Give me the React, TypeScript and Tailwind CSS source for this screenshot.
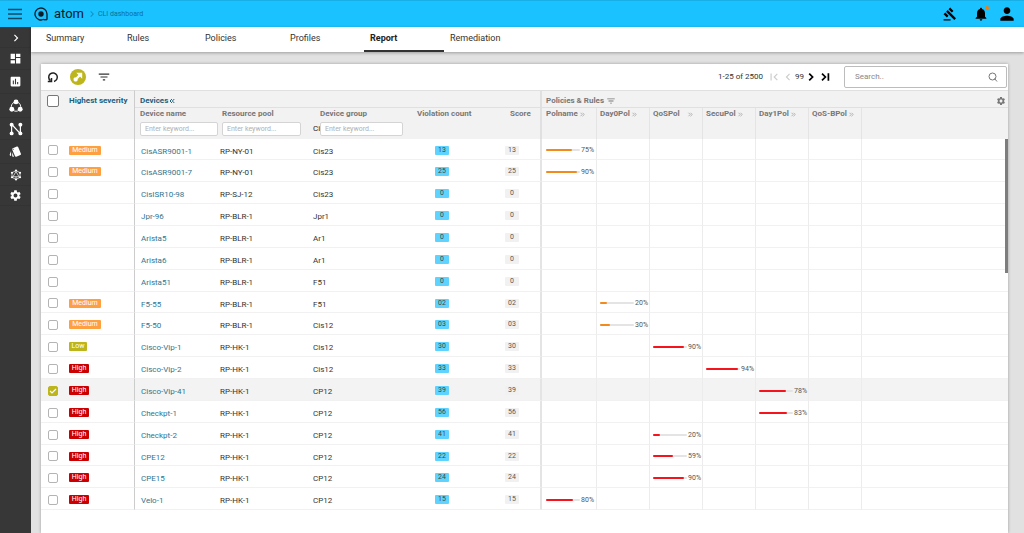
import React, { useState } from 'react'
import clsx from 'clsx'
import { ChevronsLeft, ChevronsRight } from 'lucide-react'
import {
  MdChevronLeft,
  MdChevronRight,
  MdDashboard,
  MdFilterList,
  MdFirstPage,
  MdGavel,
  MdInsertChart,
  MdNotifications,
  MdPerson,
  MdSettings,
  MdStyle
} from 'react-icons/md'

type Severity = 'Low' | 'Medium' | 'High'

interface Device {
  name: string
  pool: string
  group: string
  count: string
  severity?: Severity
  policy?: string
  value?: number
}

const policies = ['Polname', 'Day0Pol', 'QoSPol', 'SecuPol', 'Day1Pol', 'QoS-BPol']

const devices: Device[] = [
  { name: 'CisASR9001-1', pool: 'RP-NY-01', group: 'Cis23', count: '13', severity: 'Medium', policy: 'Polname', value: 75 },
  { name: 'CisASR9001-7', pool: 'RP-NY-01', group: 'Cis23', count: '25', severity: 'Medium', policy: 'Polname', value: 90 },
  { name: 'CisISR10-98', pool: 'RP-SJ-12', group: 'Cis23', count: '0' },
  { name: 'Jpr-96', pool: 'RP-BLR-1', group: 'Jpr1', count: '0' },
  { name: 'Arista5', pool: 'RP-BLR-1', group: 'Ar1', count: '0' },
  { name: 'Arista6', pool: 'RP-BLR-1', group: 'Ar1', count: '0' },
  { name: 'Arista51', pool: 'RP-BLR-1', group: 'F51', count: '0' },
  { name: 'F5-55', pool: 'RP-BLR-1', group: 'F51', count: '02', severity: 'Medium', policy: 'Day0Pol', value: 20 },
  { name: 'F5-50', pool: 'RP-BLR-1', group: 'Cis12', count: '03', severity: 'Medium', policy: 'Day0Pol', value: 30 },
  { name: 'Cisco-Vip-1', pool: 'RP-HK-1', group: 'Cis12', count: '30', severity: 'Low', policy: 'QoSPol', value: 90 },
  { name: 'Cisco-Vip-2', pool: 'RP-HK-1', group: 'Cis12', count: '33', severity: 'High', policy: 'SecuPol', value: 94 },
  { name: 'Cisco-Vip-41', pool: 'RP-HK-1', group: 'CP12', count: '39', severity: 'High', policy: 'Day1Pol', value: 78 },
  { name: 'Checkpt-1', pool: 'RP-HK-1', group: 'CP12', count: '56', severity: 'High', policy: 'Day1Pol', value: 83 },
  { name: 'Checkpt-2', pool: 'RP-HK-1', group: 'CP12', count: '41', severity: 'High', policy: 'QoSPol', value: 20 },
  { name: 'CPE12', pool: 'RP-HK-1', group: 'CP12', count: '22', severity: 'High', policy: 'QoSPol', value: 59 },
  { name: 'CPE15', pool: 'RP-HK-1', group: 'CP12', count: '24', severity: 'High', policy: 'QoSPol', value: 90 },
  { name: 'Velo-1', pool: 'RP-HK-1', group: 'CP12', count: '15', severity: 'High', policy: 'Polname', value: 80 }
]

const tabs = [
  { label: 'Summary', width: 'w-[81px]' },
  { label: 'Rules', width: 'w-[78px]' },
  { label: 'Policies', width: 'w-[85px]' },
  { label: 'Profiles', width: 'w-[80px]' },
  { label: 'Report', width: 'w-[80px]' },
  { label: 'Remediation', width: 'w-[80px]' }
]

const severityStyle: Record<Severity, string> = {
  Low: 'w-[18px] bg-[#bdb51c]',
  Medium: 'w-8 bg-[#ffa040]',
  High: 'w-5 bg-[#cc0000]'
}

// Three nodes on a ring
const TriadIcon = () => (
  <svg viewBox="0 0 24 24" className="size-3.5" fill="currentColor">
    <circle cx="12" cy="13" r="8" fill="none" stroke="currentColor" strokeWidth="1.6" />
    <circle cx="12" cy="5" r="4.2" />
    <circle cx="4.8" cy="17.5" r="4.2" />
    <circle cx="19.2" cy="17.5" r="4.2" />
  </svg>
)

const NetworkIcon = () => (
  <svg viewBox="0 0 24 24" className="size-3.5" fill="currentColor">
    <path d="M4.5 20V4L19.5 20V4" fill="none" stroke="currentColor" strokeWidth="2" />
    <circle cx="4.5" cy="4.5" r="3.4" />
    <circle cx="19.5" cy="4.5" r="3.4" />
    <circle cx="4.5" cy="19.5" r="3.4" />
    <circle cx="19.5" cy="19.5" r="3.4" />
  </svg>
)

const HexIcon = () => (
  <svg viewBox="0 0 24 24" className="size-3" fill="none" stroke="currentColor" strokeWidth="1.4">
    <path d="M12 3l8 4.5v9L12 21l-8-4.5v-9z" />
    <path d="M12 5L6 15.5h12zM12 15.5V21" />
    <g fill="currentColor" stroke="none">
      <circle cx="12" cy="3" r="2.2" />
      <circle cx="20" cy="7.5" r="2.2" />
      <circle cx="20" cy="16.5" r="2.2" />
      <circle cx="12" cy="21" r="2.2" />
      <circle cx="4" cy="16.5" r="2.2" />
      <circle cx="4" cy="7.5" r="2.2" />
    </g>
  </svg>
)

const ReloadIcon = () => (
  <svg viewBox="0 0 12 12" className="size-3" fill="none" stroke="#222" strokeWidth="1.5">
    <path d="M7 10.4A4.3 4.3 0 1 0 3.5 9.7" />
    <path d="M0.8 10.5h3.7V7" />
  </svg>
)

// Arrow heading out of a node
const ConnectIcon = () => (
  <svg viewBox="0 0 16 16" className="size-4">
    <circle cx="8" cy="8" r="8" fill="#bdb51c" />
    <path d="M5.5 10.5l5-5" stroke="#fff" strokeWidth="2.4" />
    <path d="M6.3 3.8h5.9v5.9z" fill="#fff" />
    <rect x="3.6" y="8.4" width="4" height="4" rx="1.4" fill="#fff" />
  </svg>
)

const Logo = () => (
  <svg viewBox="0 0 14 14" className="size-3.5" fill="none" stroke="#0b1c26" strokeWidth="1.3">
    <path d="M13 12.7V7a6 6 0 1 0-3.2 5.3" />
    <path d="M9.6 12.7H13" />
    <circle cx="7" cy="7" r="2.7" fill="#0b1c26" stroke="none" />
  </svg>
)

const SearchIcon = () => (
  <svg viewBox="0 0 10 10" className="size-2.5" fill="none" stroke="#777" strokeWidth="1">
    <circle cx="4.5" cy="4.5" r="3.5" />
    <path d="M6.5 6.5l2.5 3" />
  </svg>
)

const NextIcon = ({ last }: { last?: boolean }) => (
  <svg viewBox="0 0 14 14" className="size-3.5" fill="none" stroke="currentColor" strokeWidth="1.7">
    {last ? <path d="M4 3.6l3.4 3.4L4 10.4M10.4 3.3v7.4" /> : <path d="M5.2 3.6l3.4 3.4-3.4 3.4" />}
  </svg>
)

const sideItems = [
  { label: 'Expand menu', icon: <MdChevronRight className="size-3.5" />, height: 'h-5' },
  { label: 'Dashboard', icon: <MdDashboard className="size-[13px]" />, height: 'h-[22px]' },
  { label: 'Reports', icon: <MdInsertChart className="size-[13px]" />, height: 'h-6' },
  { label: 'Services', icon: <TriadIcon />, height: 'h-6' },
  { label: 'Network', icon: <NetworkIcon />, height: 'h-[22px]' },
  { label: 'Templates', icon: <MdStyle className="size-[13px]" />, height: 'h-6' },
  { label: 'Automation', icon: <HexIcon />, height: 'h-[22px]' },
  { label: 'Settings', icon: <MdSettings className="size-[13px]" />, height: 'h-5' }
]

interface CheckboxProps {
  label: string
  checked: boolean
  onChange: () => void
  large?: boolean
}

const Checkbox = ({ label, checked, onChange, large }: CheckboxProps) => (
  <label className="grid w-fit place-items-center">
    <input
      type="checkbox"
      aria-label={label}
      checked={checked}
      onChange={onChange}
      className={clsx(
        'col-start-1 row-start-1 appearance-none rounded-[2px] border bg-white checked:border-[#bdb51c] checked:bg-[#bdb51c]',
        large ? 'size-3 border-[#777]' : 'size-2.5 border-[#b4b4b4]'
      )}
    />
    {checked && (
      <svg viewBox="0 0 10 10" className="pointer-events-none col-start-1 row-start-1 size-2.5" fill="none" stroke="#fff" strokeWidth="1.2">
        <path d="M2 5l2 2 4-4" />
      </svg>
    )}
  </label>
)

const FilterInput = ({ label }: { label: string }) => (
  <input
    aria-label={label}
    placeholder="Enter keyword..."
    className="h-3.5 min-w-0 flex-1 rounded-[2px] border border-[#d4d4d4] bg-white px-1 text-[7px] font-normal text-[#555] placeholder:text-[#b0b0b0]"
  />
)

const Progress = ({ value, severity }: { value: number; severity?: Severity }) => (
  <div className="flex items-center gap-px">
    <div className="h-0.5 w-[34px] shrink-0 rounded-full bg-[#e4e4e4]">
      <div
        className={clsx('h-0.5 rounded-full', severity === 'Medium' ? 'bg-[#f28a1c]' : 'bg-[#f5141c]')}
        style={{ width: `${value}%` }}
      />
    </div>
    <span className="text-[7px] leading-2 text-[#555]">{value}%</span>
  </div>
)

export default function App() {
  const [activeTab, setActiveTab] = useState('Report')
  const [selected, setSelected] = useState<string[]>(['Cisco-Vip-41'])
  const allSelected = selected.length === devices.length

  const toggle = (name: string) =>
    setSelected(prev => (prev.includes(name) ? prev.filter(n => n !== name) : [...prev, name]))

  return (
    <div className="flex min-h-screen flex-col bg-[#e1e1e1] font-['Roboto',sans-serif] text-[#333]">
      {/* Top bar */}
      <header className="flex h-[27px] items-center border-t border-[#18aee6] bg-[#1ac2ff] pr-[7px] pl-2">
        <button aria-label="Menu" className="mr-3 text-[#0d4a66]">
          <svg viewBox="0 0 14 12" className="h-3 w-3.5" stroke="currentColor" strokeWidth="1.4">
            <path d="M0 1.5h14M0 6h14M0 10.5h14" />
          </svg>
        </button>
        <Logo />
        <span className="ml-1.5 text-[13px] leading-4 text-[#0b1c26]">atom</span>
        <MdChevronRight className="ml-0.5 size-3 text-[#1391c2]" />
        <a href="#cli" className="text-[7px] leading-3 text-[#0c7099]">CLI dashboard</a>
        <div className="ml-auto flex items-center gap-4 text-black">
          <button aria-label="Audit"><MdGavel className="size-3.5" /></button>
          <button aria-label="Notifications" className="relative">
            <MdNotifications className="size-4" />
            <span className="absolute top-0 right-0 size-1 rounded-full bg-[#ff7b00]" />
          </button>
          <button aria-label="Account" className="-ml-2"><MdPerson className="size-5" /></button>
        </div>
      </header>

      <div className="flex flex-1">
        {/* Sidebar */}
        <nav className="flex w-[31px] shrink-0 flex-col bg-[#373737] pt-px text-white">
          {sideItems.map(item => (
            <button
              key={item.label}
              aria-label={item.label}
              className={clsx('flex items-center justify-center border-b border-[#333]', item.height)}
            >
              {item.icon}
            </button>
          ))}
        </nav>

        <main className="flex min-w-0 flex-1 flex-col">
          <div className="flex h-[25px] bg-white pl-[9px] shadow-[0_1px_3px_rgba(0,0,0,0.3)]">
            {tabs.map(tab => (
              <button
                key={tab.label}
                onClick={() => setActiveTab(tab.label)}
                className={clsx(
                  'border-b-2 pb-0.5 pl-1.5 text-left text-[9px] leading-3',
                  tab.width,
                  tab.label === activeTab ? 'border-[#333] font-bold text-[#222]' : 'border-transparent'
                )}
              >
                {tab.label}
              </button>
            ))}
          </div>

          <section className="mt-3 mr-4 ml-2.5 flex flex-1 flex-col bg-white shadow-[0_0_3px_rgba(0,0,0,0.3)]">
            {/* Toolbar */}
            <div className="flex h-[26px] items-center pr-px pl-1.5">
              <button aria-label="Reload"><ReloadIcon /></button>
              <button aria-label="Connect" className="ml-[11px]"><ConnectIcon /></button>
              <button aria-label="Filter" className="ml-[11px]"><MdFilterList className="size-3.5" /></button>
              <div className="ml-auto flex items-center text-[8px] leading-3 text-[#333]">
                <span className="mr-1">1-25 of 2500</span>
                <button aria-label="First page" className="text-[#ccc]"><MdFirstPage className="size-3.5" /></button>
                <button aria-label="Previous page" className="text-[#ccc]"><MdChevronLeft className="size-3.5" /></button>
                <span>99</span>
                <button aria-label="Next page" className="text-black"><NextIcon /></button>
                <button aria-label="Last page" className="text-black"><NextIcon last /></button>
              </div>
              <div className="ml-3 flex h-[22px] w-[163px] items-center rounded-[2px] border border-[#bcbcbc] bg-white pr-2 pl-2.5">
                <input
                  aria-label="Search"
                  placeholder="Search.."
                  className="min-w-0 flex-1 text-[8px] leading-3 outline-none placeholder:text-[#888]"
                />
                <SearchIcon />
              </div>
            </div>

            <div className="relative">
              <table className="w-full table-fixed border-separate border-spacing-0 text-left">
                <colgroup>
                  <col className="w-7" />
                  <col className="w-[66px]" />
                  <col className="w-[85px]" />
                  <col className="w-[93px]" />
                  <col className="w-[104px]" />
                  <col className="w-[86px]" />
                  <col className="w-[39px]" />
                  <col className="w-[55px]" />
                  <col className="w-[53px]" />
                  <col className="w-[53px]" />
                  <col className="w-[53px]" />
                  <col className="w-[53px]" />
                  <col className="w-[53px]" />
                  <col />
                </colgroup>
                <thead className="bg-[#f2f2f2] text-[8px] leading-3 text-[#777]">
                  <tr className="h-[18px]">
                    <th rowSpan={2} className="border-t border-[#ddd] pt-1 pl-1.5 align-top">
                      <Checkbox
                        large
                        label="Select all devices"
                        checked={allSelected}
                        onChange={() => setSelected(allSelected ? [] : devices.map(d => d.name))}
                      />
                    </th>
                    <th rowSpan={2} className="border-t border-r border-t-[#ddd] border-r-[#ccc] pt-1 align-top text-[#1b617f]">
                      <span className="whitespace-nowrap">Highest severity</span>
                    </th>
                    <th colSpan={5} className="border-t border-r-2 border-b border-[#e0e0e0] pt-1 pl-[5px] text-[#1b617f]">
                      <div className="flex items-center">
                        Devices
                        <ChevronsLeft className="size-2" strokeWidth={3} />
                      </div>
                    </th>
                    <th colSpan={7} className="border-t border-b border-[#e0e0e0] pt-1 pr-0.5 pl-1">
                      <div className="flex items-center gap-0.5">
                        Policies &amp; Rules
                        <MdFilterList className="size-2.5" />
                        <button aria-label="Table settings" className="ml-auto"><MdSettings className="size-2.5" /></button>
                      </div>
                    </th>
                  </tr>
                  <tr className="h-[31px] align-top">
                    <th className="pr-0.5 pl-[5px]">
                      Device name
                      <div className="mt-0.5 flex"><FilterInput label="Filter device name" /></div>
                    </th>
                    <th className="pr-3 pl-0.5">
                      Resource pool
                      <div className="mt-0.5 flex"><FilterInput label="Filter resource pool" /></div>
                    </th>
                    <th className="pr-3.5">
                      <span className="pl-[7px]">Device group</span>
                      <div className="mt-0.5 flex items-center">
                        <span className="w-[7px] overflow-hidden font-normal text-[#222]">Ci</span>
                        <FilterInput label="Filter device group" />
                      </div>
                    </th>
                    <th><span className="whitespace-nowrap">Violation count</span></th>
                    <th className="border-r-2 border-[#e0e0e0] pl-[7px]">Score</th>
                    {policies.map((policy, i) => (
                      <th key={policy} className={clsx('border-r border-[#e4e4e4]', i === 0 ? 'pl-1' : 'pl-[3px]')}>
                        <div className="flex items-center gap-px">
                          {policy}
                          <ChevronsRight className={clsx('size-[7px] shrink-0 text-[#aaa]', policy === 'QoSPol' && 'mr-2 ml-auto')} strokeWidth={3} />
                        </div>
                      </th>
                    ))}
                    <th />
                  </tr>
                </thead>
                <tbody className="text-[8px] leading-2.5 [&_td]:border-b [&_td]:border-b-[#f1f1f1] [&_td]:pt-0.5 [&_td]:pb-0">
                  {devices.map((device, i) => {
                    const checked = selected.includes(device.name)
                    return (
                      <tr key={device.name} className={clsx(i % 7 === 0 ? 'h-[21px]' : 'h-[22px]', checked && 'bg-[#f3f3f3]')}>
                        <td className="pl-[7px]">
                          <Checkbox label={`Select ${device.name}`} checked={checked} onChange={() => toggle(device.name)} />
                        </td>
                        <td className="border-r border-r-[#ccc]">
                          {device.severity && (
                            <span className={clsx('block rounded-[1px] text-center text-[7px] leading-[9px] text-white', severityStyle[device.severity])}>
                              {device.severity}
                            </span>
                          )}
                        </td>
                        <td className="pl-1.5"><a href={`#${device.name}`} className="block pt-[3px] text-[#2f7591]">{device.name}</a></td>
                        <td><span className="block pt-[3px]">{device.pool}</span></td>
                        <td><span className="block pt-[3px]">{device.group}</span></td>
                        <td className="pl-[18px]">
                          <span className="block w-3.5 rounded-[1px] bg-[#5ed3ff] text-center text-[7px] leading-[9px] text-[#444]">{device.count}</span>
                        </td>
                        <td className="border-r-2 border-r-[#e4e4e4] pl-0.5">
                          <span className="block w-3.5 rounded-[1px] bg-[#f1f1f1] text-center text-[7px] leading-[9px] text-[#555]">{device.count}</span>
                        </td>
                        {policies.map((policy, p) => (
                          <td key={policy} className={clsx('border-r border-r-[#ececec]', p === 0 ? 'pl-1' : 'pl-[3px]')}>
                            {device.policy === policy && device.value !== undefined && (
                              <Progress value={device.value} severity={device.severity} />
                            )}
                          </td>
                        ))}
                        <td />
                      </tr>
                    )
                  })}
                </tbody>
              </table>
              {/* Scroll thumb */}
              <div className="absolute top-[49px] right-0 h-[134px] w-[3px] bg-[#7d7d7d]" />
            </div>
          </section>
        </main>
      </div>
    </div>
  )
}
